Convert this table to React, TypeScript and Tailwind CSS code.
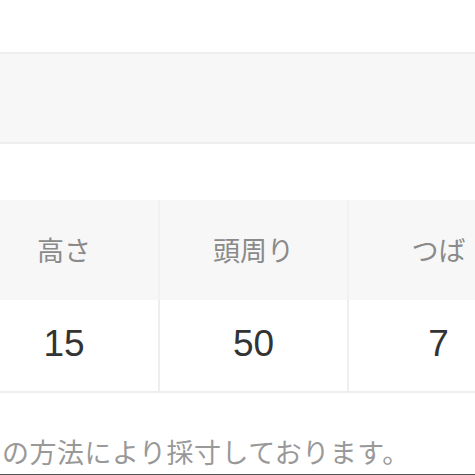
const headers = ["高さ", "頭周り", "つば"];
const values = ["15", "50", "7"];

export default function App() {
  return (
    <div className="w-[475px] h-[475px] overflow-hidden bg-white relative" style={{ fontFamily: '"Noto Sans CJK JP", sans-serif' }}>
      {/* top spacer + gray band */}
      <div className="h-[52px]" />
      <div className="h-[92px] bg-[#f7f7f7] border-y-2 border-[#eeeeee]" />
      <div className="h-[56px]" />

      {/* size table */}
      <div className="ml-[-30px] w-[600px]">
        <div className="grid grid-cols-[188px_189px_223px] h-[100px] bg-[#f7f7f7]">
          {headers.map((h, i) => (
            <div key={h} className={`flex items-center justify-center text-[27px] text-[#8a8a8a] ${i > 0 ? "border-l-2 border-[#f1f1f1]" : ""}`}>
              <span className={i === 2 ? "mr-[42px]" : ""}>{h}</span>
            </div>
          ))}
        </div>
        <div className="grid grid-cols-[188px_189px_223px] h-[93px] border-b-2 border-[#eeeeee]">
          {values.map((v, i) => (
            <div
              key={v}
              className={`flex items-center justify-center pb-[3px] text-[37px] text-[#333333] ${i > 0 ? "border-l-2 border-[#eeeeee]" : ""}`}
              style={{ fontFamily: '"Liberation Sans", "Noto Sans CJK JP", sans-serif' }}
            >
              <span className={i === 2 ? "mr-[42px]" : ""}>{v}</span>
            </div>
          ))}
        </div>
      </div>

      <p className="mt-[41px] ml-[2px] text-[27px] tracking-[0.5px] leading-[36px] text-[#999999] whitespace-nowrap">
        の方法により採寸しております。
      </p>

      <div className="absolute left-0 bottom-0 w-full h-px bg-[#555555]" />
    </div>
  );
}
